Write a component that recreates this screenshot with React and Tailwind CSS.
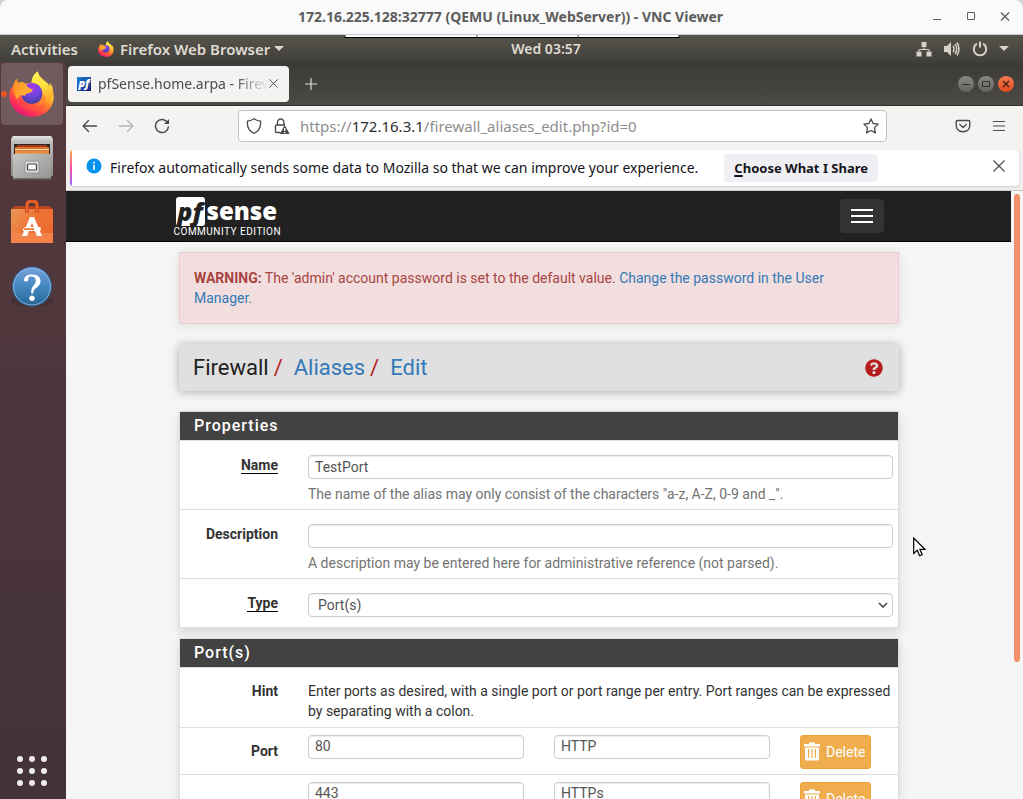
import React from "react";
import { FaQuestionCircle } from "react-icons/fa";

function FirefoxLogo({ id, className }) {
  return (
    <svg viewBox="0 0 46 46" className={className} aria-hidden="true">
      <defs>
        <linearGradient id={id + "-body"} x1="0.85" y1="0.1" x2="0.25" y2="0.95">
          <stop offset="0" stopColor="#fff44f" />
          <stop offset="0.3" stopColor="#ffb52a" />
          <stop offset="0.55" stopColor="#ff6a2f" />
          <stop offset="0.78" stopColor="#ff3750" />
          <stop offset="1" stopColor="#e5127a" />
        </linearGradient>
        <radialGradient id={id + "-globe"} cx="0.5" cy="0.2" r="0.8">
          <stop offset="0" stopColor="#a637e8" />
          <stop offset="0.5" stopColor="#7444e0" />
          <stop offset="1" stopColor="#3f3f9c" />
        </radialGradient>
        <linearGradient id={id + "-flame"} x1="0.3" y1="0" x2="0.6" y2="1">
          <stop offset="0" stopColor="#fff14e" />
          <stop offset="0.5" stopColor="#ffdc3e" />
          <stop offset="1" stopColor="#ff9a28" />
        </linearGradient>
        <linearGradient id={id + "-ear"} x1="0" y1="0" x2="1" y2="0.6">
          <stop offset="0" stopColor="#ff8a1f" />
          <stop offset="1" stopColor="#ffb93a" />
        </linearGradient>
      </defs>
      <path
        d="M4.600 14.200C4.900 11.700 6.300 9.200 8.200 7.800c-.2 1.700.1 3 .9 4.300 1.600-.9 3-1.200 4.600-1.100L16 13l7-1.500C32 10 42 12 44.600 23.500 46 36 36.500 45.800 23.200 45.800 10.300 45.800.3 36.400.3 24.500c0-4 1.600-7.700 4.300-10.300z"
        fill={`url(#${id}-body)`}
      />
      <path
        d="M28.800.2c-2.500 1.700-6 5-6.300 11.300 5 .2 9 2.600 10.800 7.100 2.200 6-.6 12-5.800 15.400 8.500-.2 15-5.500 16.500-11.500.9-4.300-.8-8.600-3.800-10.500.4 1.500.5 2.600.4 3.700C38.500 9.300 30.100 8.400 28.800.2z"
        fill={`url(#${id}-flame)`}
      />
      <circle cx="22.800" cy="22.500" r="10.600" fill={`url(#${id}-globe)`} />
      <path
        d="M4.600 14.500c.4-2.700 1.700-5.200 3.600-6.500-.2 1.600.1 2.900.9 4.200 2.500-1.400 5.500-1.100 8.200.8 0 1.800 2.300 4.600 6.400 5.200-.2 2.300-2.200 3.400-4.500 4-1.800.5-2.900 1.300-3.700 2.700-3.500-1.600-6 .4-7 3.600-2.800-2.700-4.200-9.600-3.900-14z"
        fill={`url(#${id}-ear)`}
      />
      <path
        d="M8.500 25.500c1 7.200 8.500 11.200 15.500 9.300 6-1.600 10-6.300 10.300-12 2.700 2.500 3.200 6.200 1.700 9.700-2.800 6-9.800 8.300-15.900 6.800C13.500 37.800 8.700 32.500 8.500 25.500z"
        fill="#ff5a3c"
        opacity="0.45"
      />
    </svg>
  );
}

function FilesIcon() {
  return (
    <svg viewBox="0 0 44 46" className="h-[46px] w-[44px]" aria-hidden="true">
      <defs>
        <linearGradient id="files-back" x1="0" y1="0" x2="0" y2="1">
          <stop offset="0" stopColor="#e4e4e2" />
          <stop offset="0.15" stopColor="#bcbcba" />
          <stop offset="1" stopColor="#8b8b89" />
        </linearGradient>
        <linearGradient id="files-front" x1="0" y1="0" x2="1" y2="1">
          <stop offset="0" stopColor="#c6c6c4" />
          <stop offset="1" stopColor="#959593" />
        </linearGradient>
      </defs>
      <path d="M3 1h38l2 3v37H1V4z" fill="url(#files-back)" />
      <rect x="4" y="9" width="36" height="10" fill="#332821" />
      <rect x="7" y="10" width="30" height="3" fill="#a23a16" />
      <rect x="5" y="12" width="34" height="3" fill="#e0702c" />
      <rect x="5" y="14" width="34" height="1.500" fill="#ffd9a8" />
      <rect x="5" y="15.500" width="34" height="4" fill="#ee8936" />
      <path d="M3 20l3-1.500h32l3 1.500v24H3z" fill="url(#files-front)" />
      <path d="M3 43h38v1.500H3z" fill="#6d6d6b" />
      <rect x="15" y="26" width="14" height="12" rx="2" fill="#dcdcda" stroke="#8a8a88" strokeWidth="0.800" />
      <rect x="17.500" y="29" width="9" height="6" rx="1" fill="#f5f5f3" stroke="#444" strokeWidth="1.200" />
    </svg>
  );
}

function SoftwareIcon() {
  return (
    <svg viewBox="0 0 44 46" className="h-[46px] w-[44px]" aria-hidden="true">
      <defs>
        <linearGradient id="bag-front" x1="0" y1="0" x2="1" y2="0.6">
          <stop offset="0" stopColor="#e89a5c" />
          <stop offset="0.5" stopColor="#ee7536" />
          <stop offset="1" stopColor="#ed6a2c" />
        </linearGradient>
      </defs>
      <path d="M2 9l3-2h34l3 2v5H2z" fill="#b8441a" />
      <path d="M1 10h42v34H1z" fill="url(#bag-front)" />
      <path d="M1 34h42v10H1z" fill="#f58a55" opacity="0.7" />
      <path d="M17 14V6q0-3.500 3-3.500h4q3 0 3 3.500v8" fill="none" stroke="#c8481a" strokeWidth="3.600" />
      <path d="M17 14V6q0-3.500 3-3.500h4q3 0 3 3.500v8" fill="none" stroke="#ea6530" strokeWidth="2" />
      <path d="M20 18h4l8 19h-5l-5-13-5 13h-5z" fill="#fff" />
      <path d="M15 28h14q2 0 2 2t-2 2H13v-2z" fill="#fff" />
      <path d="M14 29.300h10v1.600H14z" fill="#ed6a2c" />
    </svg>
  );
}

function HelpIcon() {
  return (
    <svg viewBox="0 0 44 46" className="h-[46px] w-[44px]" aria-hidden="true">
      <defs>
        <linearGradient id="help-disc" x1="0" y1="0" x2="0" y2="1">
          <stop offset="0" stopColor="#7ba3de" />
          <stop offset="0.5" stopColor="#4487bf" />
          <stop offset="1" stopColor="#256594" />
        </linearGradient>
      </defs>
      <ellipse cx="22" cy="37" rx="21" ry="6" fill="#000" opacity="0.12" />
      <circle cx="22" cy="22.500" r="19.500" fill="url(#help-disc)" stroke="#275f90" />
      <circle cx="22" cy="22.500" r="18.500" fill="none" stroke="#94bbe2" strokeWidth="0.800" />
      <path d="M14 15.500Q15 10.500 22 10.500c5.500 0 8.500 2.800 8.500 6.500 0 4-2.800 5.700-5 7.500-1.800 1.500-2.200 2.500-2.300 5h-2c-.1-4 .6-6 2.300-8 1.500-1.700 2.300-2.800 2.300-4.800 0-2.700-1.600-4.200-4.300-4.200-1.600 0-2.700.4-3.400 1.200.9 1.700 0 3.800-2 3.800-1.400 0-2.300-.9-2.100-2z" fill="#fff" />
      <circle cx="22" cy="34.300" r="2.700" fill="#fff" />
    </svg>
  );
}

function CloseX({ className }) {
  return (
    <svg viewBox="0 0 12 12" className={className} fill="none" stroke="currentColor" strokeWidth="1.200" aria-hidden="true">
      <path d="M.5.5l11 11M11.500.5l-11 11" />
    </svg>
  );
}

function TitleBar() {
  return (
    <header className="flex h-[35px] shrink-0 items-center rounded-t-lg border-b border-[#c8c8c8] bg-[#fafafa] pr-3 pl-[90px] text-[#5c5c5c]">
      <h1 className="flex-1 text-center text-[14px] leading-5 font-bold">
        172.16.225.128:32777 (QEMU (Linux_WebServer)) - VNC Viewer
      </h1>
      <div className="flex gap-[22px]">
        <button aria-label="Minimize" className="h-3 w-3">
          <svg viewBox="0 0 12 12" className="h-3 w-3" stroke="currentColor" fill="none"><path d="M2 8.500h8" /></svg>
        </button>
        <button aria-label="Maximize" className="h-3 w-3">
          <svg viewBox="0 0 12 12" className="h-3 w-3" stroke="currentColor" fill="none"><path d="M2.500 1.500h7v7h-7z" /></svg>
        </button>
        <button aria-label="Close" className="h-3 w-3">
          <svg viewBox="0 0 12 12" className="h-3 w-3" stroke="currentColor" fill="none" strokeWidth="1.300"><path d="M2 1.500l8 8M10 1.500l-8 8" /></svg>
        </button>
      </div>
    </header>
  );
}

function TopBar() {
  return (
    <div className="relative flex h-[27px] shrink-0 items-center bg-linear-to-b from-[#57544b] to-[#403f3a] pr-[14px] pl-[11px] text-[15px] leading-5 font-semibold text-[#dfdbd2]">
      <div className="absolute top-0 left-1/2 flex h-[3px] w-[335px] -translate-x-1/2 border-x border-b border-black bg-white">
        <span className="flex-1 border-r border-[#555]" />
        <span className="w-[101px] border-r border-[#555]" />
        <span className="w-[100px]" />
      </div>
      <div className="flex flex-1 items-center">
        <button>Activities</button>
        <button className="ml-5 flex items-center">
          <FirefoxLogo id="menu" className="mr-[6px] h-4 w-4" />
          Firefox Web Browser
          <svg viewBox="0 0 10 5" className="ml-1 h-[5px] w-[10px]" aria-hidden="true"><path d="M0 0h10L5 5z" fill="#dfdbd2" /></svg>
        </button>
      </div>
      <span className="pl-[72px] text-[14px]">Wed 03:57</span>
      <div className="flex flex-1 items-center justify-end">
        <svg viewBox="0 0 16 16" className="mr-3 h-4 w-4" fill="#d6d2ca" aria-hidden="true">
          <path d="M5.500 1h5v5h-5zM.5 10.500h5v5h-5zM10.500 10.500h5v5h-5z" />
          <path d="M8 6v2.500M3 10.500v-2h10v2" fill="none" stroke="#d6d2ca" />
        </svg>
        <svg viewBox="0 0 16 16" className="mr-3 h-4 w-4" fill="#d6d2ca" aria-hidden="true">
          <path d="M0 5h3l4-4v14l-4-4H0z" />
          <path d="M9 5q2 3 0 6M11 3q3.500 5 0 10M13 1.500q4 6.500 0 13" fill="none" stroke="#d6d2ca" strokeWidth="1.500" />
        </svg>
        <svg viewBox="0 0 16 16" className="mr-[11px] h-4 w-4" fill="none" stroke="#d6d2ca" strokeWidth="2" aria-hidden="true">
          <path d="M5 2.700a6.200 6.200 0 1 0 6 0M8 .5v6" />
        </svg>
        <svg viewBox="0 0 10 5" className="h-[5px] w-[10px]" aria-hidden="true"><path d="M0 0h10L5 5z" fill="#d6d2ca" /></svg>
      </div>
    </div>
  );
}

function Dock() {
  return (
    <nav aria-label="Dock" className="flex w-[66px] shrink-0 flex-col bg-linear-to-b from-[#55393d] to-[#43323a] pt-px">
      <button aria-label="Firefox" className="relative ml-px flex h-[62px] w-[62px] items-center justify-center rounded bg-[#725b5f]">
        <span className="absolute top-[28px] left-0 h-[6px] w-[6px] rounded-full bg-[#e95420]" />
        <FirefoxLogo id="dock" className="h-[46px] w-[46px]" />
      </button>
      <button aria-label="Files" className="mt-[10px] ml-[10px] h-[46px] w-[44px]"><FilesIcon /></button>
      <button aria-label="Software" className="mt-[18px] ml-[10px] h-[46px] w-[44px]"><SoftwareIcon /></button>
      <button aria-label="Help" className="mt-[19px] ml-[10px] h-[46px] w-[44px]"><HelpIcon /></button>
      <button aria-label="Show applications" className="mt-auto mb-[10px] ml-[14px] grid h-9 w-9 grid-cols-3 place-items-center">
        {Array.from({ length: 9 }, (_, i) => (
          <span key={i} className="h-[6px] w-[6px] rounded-full bg-[#eeecec]" />
        ))}
      </button>
    </nav>
  );
}

function TabStrip() {
  return (
    <div className="flex h-11 shrink-0 items-center border-b border-[#31302c] bg-linear-to-b from-[#3b3a36] to-[#4b4a44] pr-[9px] pl-[2px]">
      <div className="flex h-9 w-[221px] items-center rounded bg-[#f4f3f2] pr-[11px] pl-[9px] text-[#4c4c4c]">
        <span aria-hidden="true" className="mr-[7px] flex h-[14px] w-[14px] items-center justify-center bg-linear-to-br from-[#1685d8] to-[#1a1677] pb-[2px] font-['Open_Sans',sans-serif] text-[11px] leading-none font-extrabold text-white italic">
          pf
        </span>
        <span className="flex-1 overflow-hidden mask-r-from-80% text-[14px] leading-5 whitespace-nowrap">
          pfSense.home.arpa - Firewall
        </span>
        <button aria-label="Close tab"><CloseX className="h-[9px] w-[9px]" /></button>
      </div>
      <button aria-label="New tab" className="ml-4 text-[#dedbd6]">
        <svg viewBox="0 0 12 12" className="h-3 w-3" stroke="currentColor" strokeWidth="1.200"><path d="M6 0v12M0 6h12" /></svg>
      </button>
      <div className="ml-auto flex gap-1">
        <button aria-label="Minimize window" className="flex h-4 w-4 items-center justify-center rounded-full bg-linear-to-b from-[#8a8882] to-[#64625c]">
          <svg viewBox="0 0 8 8" className="h-2 w-2" stroke="#33322e" fill="none"><path d="M0 4.500h8" /></svg>
        </button>
        <button aria-label="Maximize window" className="flex h-4 w-4 items-center justify-center rounded-full bg-linear-to-b from-[#8a8882] to-[#64625c]">
          <svg viewBox="0 0 8 8" className="h-2 w-2" stroke="#33322e" fill="none"><path d="M.5 1.500h7v5h-7z" /></svg>
        </button>
        <button aria-label="Close window" className="flex h-4 w-4 items-center justify-center rounded-full bg-linear-to-b from-[#f37a52] to-[#dd4814]">
          <svg viewBox="0 0 8 8" className="h-2 w-2" stroke="#3c1d10" strokeWidth="1.200" fill="none"><path d="M1 1l6 6M7 1L1 7" /></svg>
        </button>
      </div>
    </div>
  );
}

function Toolbar() {
  return (
    <div className="flex h-11 shrink-0 items-center bg-[#f4f3f2] pr-[17px] pb-1 pl-4 text-[#4a4a4a]">
      <button aria-label="Back">
        <svg viewBox="0 0 16 16" className="h-4 w-4" fill="none" stroke="currentColor" strokeWidth="1.300" strokeLinecap="round"><path d="M14.500 8H1.500M6.500 2.500L1.200 8l5.300 5.500" /></svg>
      </button>
      <button aria-label="Forward" className="ml-5 text-[#b5b4b3]">
        <svg viewBox="0 0 16 16" className="h-4 w-4" fill="none" stroke="currentColor" strokeWidth="1.300" strokeLinecap="round"><path d="M1.500 8h13M9.500 2.500L14.800 8l-5.300 5.500" /></svg>
      </button>
      <button aria-label="Reload" className="ml-5">
        <svg viewBox="0 0 16 16" className="h-4 w-4" fill="none" stroke="currentColor" strokeWidth="1.500"><path d="M13.500 4.500A6.500 6.500 0 1 0 14.500 8.500" /><path d="M15 1v5h-5z" fill="currentColor" stroke="none" /></svg>
      </button>
      <div className="ml-[68px] flex h-8 max-w-[649px] flex-1 items-center rounded border border-[#c3c2c0] bg-white pr-[7px] pl-[7px]">
        <svg viewBox="0 0 16 16" className="h-4 w-4 shrink-0" fill="none" stroke="currentColor" strokeWidth="1.300"><path d="M8 .8Q11.500 3 14.500 3.200 15.500 12 8 15.300.5 12 1.500 3.200 4.500 3 8 .8z" /></svg>
        <svg viewBox="0 0 16 16" className="ml-3 h-4 w-4 shrink-0" fill="none" stroke="currentColor" strokeWidth="1.400">
          <path d="M3.500 7V4.200a3.200 3.200 0 0 1 6.400 0V7M6.500 14.500H2.500q-1 0-1-1V8q0-1 1-1H11" />
          <path d="M10.700 7l5 9h-10z" fill="currentColor" stroke="none" />
          <path d="M10.700 10v3M10.700 14v1.200" stroke="#fff" />
        </svg>
        <span className="ml-[10px] flex-1 text-[15px] leading-5 text-[#8e8e8e]">
          https://<span className="text-[#2e2e2e]">172.16.3.1</span>/firewall_aliases_edit.php?id=0
        </span>
        <button aria-label="Bookmark this page">
          <svg viewBox="0 0 16 16" className="h-4 w-4" fill="none" stroke="currentColor" strokeWidth="1.300" strokeLinejoin="round"><path d="M8 .9l2.100 4.600 5 .6-3.600 3.500.9 5.300L8 12.500l-4.400 2.400.9-5.300L.9 6.100l5-.6z" /></svg>
        </button>
      </div>
      <div className="ml-auto flex items-center gap-[21px]">
        <button aria-label="Save to Pocket">
          <svg viewBox="0 0 16 16" className="h-4 w-4" fill="none" stroke="currentColor" strokeWidth="1.400" strokeLinecap="round" strokeLinejoin="round"><path d="M2.500 2.500h11q1.300 0 1.300 1.300V7q0 6.500-6.800 6.800Q1.200 13.500 1.200 7V3.800q0-1.300 1.300-1.300zM4.800 6.500L8 9.500l3.200-3" /></svg>
        </button>
        <button aria-label="Application menu">
          <svg viewBox="0 0 14 14" className="h-[14px] w-[14px]" stroke="currentColor" strokeWidth="1.200"><path d="M1 2.500h12M1 7h12M1 11.500h12" /></svg>
        </button>
      </div>
    </div>
  );
}

function NoticeBar() {
  return (
    <div className="shrink-0 border-b border-[#cccbc9] bg-[#f0efee] pr-1 pb-1 pl-1">
      <div className="flex h-9 items-center overflow-hidden rounded bg-white pr-[14px] text-[#15141a] shadow-sm">
        <span className="h-9 w-[2px] bg-linear-to-b from-[#ffa436] via-[#ff4aa2] to-[#9059ff]" />
        <svg viewBox="0 0 16 16" className="mt-2 ml-[14px] h-4 w-4 shrink-0 self-start" aria-hidden="true"><circle cx="8" cy="8" r="7.500" fill="#0090ed" /><path d="M8 6.800V12M8 3.800v1.700" stroke="#fff" strokeWidth="1.600" /></svg>
        <p className="ml-2 text-[14px] leading-5 whitespace-nowrap">
          Firefox automatically sends some data to Mozilla so that we can improve your experience.
        </p>
        <button className="ml-[26px] h-7 rounded bg-[#f0f0f4] px-[10px] text-[13px] leading-5 font-bold whitespace-nowrap">
          <span className="underline decoration-2 underline-offset-2">C</span>hoose What I Share
        </button>
        <button aria-label="Dismiss" className="mt-[10px] ml-auto self-start text-[#4a4a4f]"><CloseX className="h-3 w-3" /></button>
      </div>
    </div>
  );
}

function SiteNav() {
  return (
    <nav className="mr-3 flex h-[51px] items-center justify-center border-b border-black bg-[#212121] px-[15px]">
      <div className="flex w-full max-w-[730px] items-center justify-between">
        <a href="#home" className="pt-[2px] text-white">
          <span className="flex h-[29px] items-center pl-[2px] font-['Open_Sans',sans-serif]">
            <span className="flex h-[29px] w-[29px] items-center justify-center rounded-[3px] bg-white text-[25px] leading-none font-extrabold text-[#212121] italic">pf</span>
            <span className="ml-[2px] text-[24px] leading-none font-extrabold">sense</span>
          </span>
          <span className="block text-[10px] leading-3 tracking-wider">COMMUNITY EDITION</span>
        </a>
        <button aria-label="Toggle navigation" className="mr-5 flex h-[34px] w-11 flex-col items-center justify-center gap-1 rounded bg-[#333]">
          <span className="h-[2px] w-[22px] bg-white" />
          <span className="h-[2px] w-[22px] bg-white" />
          <span className="h-[2px] w-[22px] bg-white" />
        </button>
      </div>
    </nav>
  );
}

const field =
  "block h-6 w-full min-w-0 rounded border border-[#ccc] bg-white px-[6px] text-[14px] leading-5 text-[#555] shadow-[inset_0_1px_1px_rgba(0,0,0,0.075)] outline-none";

function Panel({ title, children }) {
  return (
    <section className="mb-[10px] border border-[#ddd] bg-white shadow-[0_5px_10px_rgba(0,0,0,0.12)]">
      <h2 className="h-7 bg-[#424242] px-[14px] text-[16px] leading-7 font-medium tracking-[1px] text-white">{title}</h2>
      <div className="divide-y divide-[#ddd] border-t border-[#ddd]">{children}</div>
    </section>
  );
}

function Row({ label, htmlFor, required, help, children, className }) {
  const labelClass = required ? "inline-block h-[19px] border-b border-black" : "";
  return (
    <div className={"grid grid-cols-[98px_1fr] gap-x-[30px] pr-[5px] " + className}>
      <div className="text-right leading-5 font-bold text-[#333]">
        {htmlFor ? <label htmlFor={htmlFor} className={labelClass}>{label}</label> : label}
      </div>
      <div>
        {children}
        {help && <p className="mt-[5px] leading-5 text-[#737373]">{help}</p>}
      </div>
    </div>
  );
}

function PortRow({ index, port, name, showLabel }) {
  return (
    <div className="grid h-[47px] grid-cols-[98px_1fr_1fr_93px] gap-x-[30px] pt-[7px] pr-[5px]">
      <label htmlFor={"port" + index} className="pt-[6px] text-right leading-5 font-bold text-[#333]">
        {showLabel ? "Port" : ""}
      </label>
      <input id={"port" + index} aria-label="Port" defaultValue={port} className={field + " pb-[2px]"} />
      <input aria-label={"Description of port " + port} defaultValue={name} className={field + " pb-[2px]"} />
      <button className="flex h-[34px] w-[71px] items-center rounded-[3px] border border-[#eea236] bg-[#f0ad4e] pb-px pl-[3px] text-[14px] leading-5 text-white">
        <svg viewBox="0 0 16 19" className="mr-[6px] h-[19px] w-4" fill="#fff" aria-hidden="true">
          <path fillRule="evenodd" d="M0 2h5V.5h6V2h5v2.500H0zM1 5.500h14V17q0 1.500-1.500 1.500h-11Q1 18.500 1 17zM4 7v9h1.200V7zM7.400 7v9h1.200V7zM10.800 7v9H12V7z" />
        </svg>
        Delete
      </button>
    </div>
  );
}

function SitePage() {
  return (
    <main className="relative min-h-0 flex-1 overflow-hidden bg-[#f5f5f5] font-[Roboto,sans-serif] text-[14px] leading-5">
      <div className="absolute top-[3px] right-[3px] h-[77%] w-[6px] rounded-full bg-[#f39069]" />
      <SiteNav />
      <div className="mr-3">
        <div className="mx-auto w-full max-w-[721px] pt-[10px] pl-px">
          <div role="alert" className="border border-[#ebccd1] bg-[#f2dede] p-[15px] pl-[14px] text-[#a94442] shadow-[0_1px_10px_rgba(0,0,0,0.1)]">
            <strong>WARNING:</strong> The 'admin' account password is set to the default value.{" "}
            <a href="#users" className="text-[#337ab7]">Change the password in the User Manager.</a>
          </div>
          <header className="mt-5 mb-5 flex h-[47px] items-center justify-between rounded-[3px] bg-[#e0e0e0] pr-4 pl-[14px] shadow-[0_1px_10px_rgba(0,0,0,0.3)]">
            <nav aria-label="Breadcrumb" className="flex text-[22px] leading-7 text-[#212121]">
              <span>Firewall</span>
              <span className="ml-[5px] text-[#b71c1c]">/</span>
              <a href="#aliases" className="ml-[11px] text-[#337ab7]">Aliases</a>
              <span className="ml-[5px] text-[#b71c1c]">/</span>
              <a href="#edit" className="ml-[11px] text-[#337ab7]">Edit</a>
            </nav>
            <a href="#help" aria-label="Help"><FaQuestionCircle className="h-[18px] w-[18px] text-[#b71c1c]" /></a>
          </header>
          <Panel title="Properties">
            <Row label="Name" htmlFor="name" required className="pt-[14px] pb-[5px]" help={'The name of the alias may only consist of the characters "a-z, A-Z, 0-9 and _".'}>
              <input id="name" defaultValue="TestPort" className={field} />
            </Row>
            <Row label="Description" htmlFor="descr" className="pt-[14px] pb-[5px]" help="A description may be entered here for administrative reference (not parsed).">
              <input id="descr" defaultValue="" className={field} />
            </Row>
            <Row label="Type" htmlFor="type" required className="pt-[14px] pb-[10px]">
              <div className="relative">
                <select id="type" className={field + " appearance-none pl-[9px]"}>
                  <option>Port(s)</option>
                </select>
                <svg viewBox="0 0 10 6" className="pointer-events-none absolute top-[9px] right-[5px] h-[6px] w-[10px]" fill="none" stroke="#444" strokeWidth="1.600" aria-hidden="true"><path d="M1 1l4 4 4-4" /></svg>
              </div>
            </Row>
          </Panel>
          <Panel title="Port(s)">
            <Row label="Hint" className="pt-[13px] pb-[6px]">
              <p className="leading-5 text-[#333]">
                Enter ports as desired, with a single port or port range per entry. Port ranges can be expressed by separating with a colon.
              </p>
            </Row>
            <PortRow index={0} port="80" name="HTTP" showLabel />
            <PortRow index={1} port="443" name="HTTPs" />
          </Panel>
        </div>
      </div>
      <svg viewBox="0 0 13 20" className="absolute top-[346px] left-[847px] h-5 w-[13px]" aria-hidden="true">
        <path d="M.7 1v15.500l3.600-3.300 2.300 5.600 2.600-1.100-2.300-5.400h5z" fill="#fff" stroke="#000" strokeWidth="1.200" />
      </svg>
    </main>
  );
}

export default function App() {
  return (
    <div className="flex h-screen flex-col overflow-hidden bg-[#d0d0d0] font-['Noto_Sans',sans-serif]">
      <TitleBar />
      <TopBar />
      <div className="flex min-h-0 flex-1">
        <Dock />
        <div className="flex min-w-0 flex-1 flex-col">
          <TabStrip />
          <Toolbar />
          <NoticeBar />
          <SitePage />
        </div>
      </div>
    </div>
  );
}
